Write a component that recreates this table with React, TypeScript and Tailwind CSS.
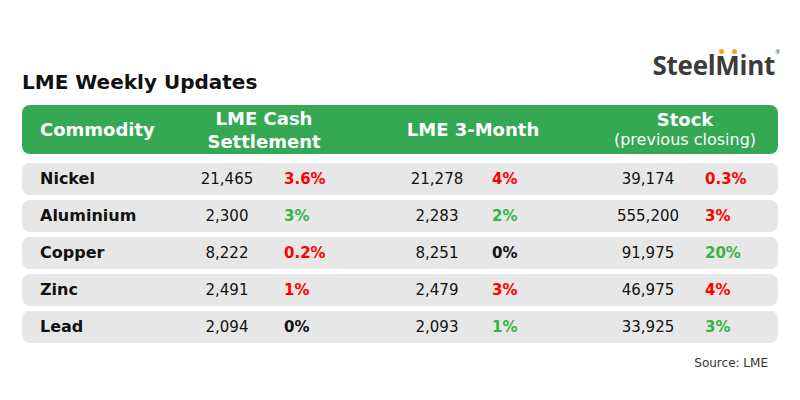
const rows = [
  { name: "Nickel", cash: "21,465", cashPct: "3.6%", cashTone: "red", m3: "21,278", m3Pct: "4%", m3Tone: "red", stock: "39,174", stockPct: "0.3%", stockTone: "red" },
  { name: "Aluminium", cash: "2,300", cashPct: "3%", cashTone: "green", m3: "2,283", m3Pct: "2%", m3Tone: "green", stock: "555,200", stockPct: "3%", stockTone: "red" },
  { name: "Copper", cash: "8,222", cashPct: "0.2%", cashTone: "red", m3: "8,251", m3Pct: "0%", m3Tone: "black", stock: "91,975", stockPct: "20%", stockTone: "green" },
  { name: "Zinc", cash: "2,491", cashPct: "1%", cashTone: "red", m3: "2,479", m3Pct: "3%", m3Tone: "red", stock: "46,975", stockPct: "4%", stockTone: "red" },
  { name: "Lead", cash: "2,094", cashPct: "0%", cashTone: "black", m3: "2,093", m3Pct: "1%", m3Tone: "green", stock: "33,925", stockPct: "3%", stockTone: "green" },
];

const toneClass: Record<string, string> = {
  red: "text-[#ff0000]",
  green: "text-[#35b444]",
  black: "text-[#111111]",
};

function Logo() {
  return (
    <div className="relative mt-[52px] font-['Open_Sans',sans-serif] text-[26px] font-bold leading-[26px] tracking-[-0.3px] text-[#3b3b3b]">
      Steel
      <span className="relative">
        M
        <span className="absolute left-[4px] top-[2px] h-[5px] w-[5px] rounded-full bg-[#f5a31a]" />
        <span className="absolute left-[17px] top-[2px] h-[5px] w-[5px] rounded-full bg-[#f5a31a]" />
      </span>
      int
      <span className="absolute right-[-5px] top-[-3px] text-[6px] font-normal leading-none">®</span>
    </div>
  );
}

export default function App() {
  return (
    <div className="h-[400px] w-[800px] bg-white px-[22px] font-['DejaVu_Sans',sans-serif] text-[#111111]">
      <div className="flex items-start justify-between pr-[3px]">
        <h1 className="mt-[70px] text-[20px] font-bold leading-[24px]">LME Weekly Updates</h1>
        <Logo />
      </div>

      <div className="mt-[11px] grid h-[49px] grid-cols-[165px_154px_264px_160px_1fr] items-center rounded-[8px] bg-[#34a853] font-bold text-white">
        <div className="pl-[18px] text-[18px]">Commodity</div>
        <div className="text-center text-[18px] leading-[23px]">
          LME Cash
          <br />
          Settlement
        </div>
        <div className="text-center text-[18px]">LME 3-Month</div>
        <div className="text-center leading-[20px]">
          <div className="text-[18px]">Stock</div>
          <div className="text-[16px] font-normal">(previous closing)</div>
        </div>
        <div />
      </div>

      <div className="mt-[9px] flex flex-col gap-[5px]">
        {rows.map((r) => (
          <div
            key={r.name}
            className="grid h-[32px] grid-cols-[165px_80px_130px_80px_126px_90px_1fr] items-center rounded-[8px] bg-[#e7e7e7] text-[15px]"
          >
            <div className="pl-[18px] text-[16px] font-bold">{r.name}</div>
            <div className="text-center">{r.cash}</div>
            <div className={`pl-[17px] font-bold ${toneClass[r.cashTone]}`}>{r.cashPct}</div>
            <div className="text-center">{r.m3}</div>
            <div className={`pl-[15px] font-bold ${toneClass[r.m3Tone]}`}>{r.m3Pct}</div>
            <div className="text-center">{r.stock}</div>
            <div className={`pl-[12px] font-bold ${toneClass[r.stockTone]}`}>{r.stockPct}</div>
          </div>
        ))}
      </div>

      <div className="mt-[11px] pr-[10px] text-right text-[12px] text-[#333333]">Source: LME</div>
    </div>
  );
}
